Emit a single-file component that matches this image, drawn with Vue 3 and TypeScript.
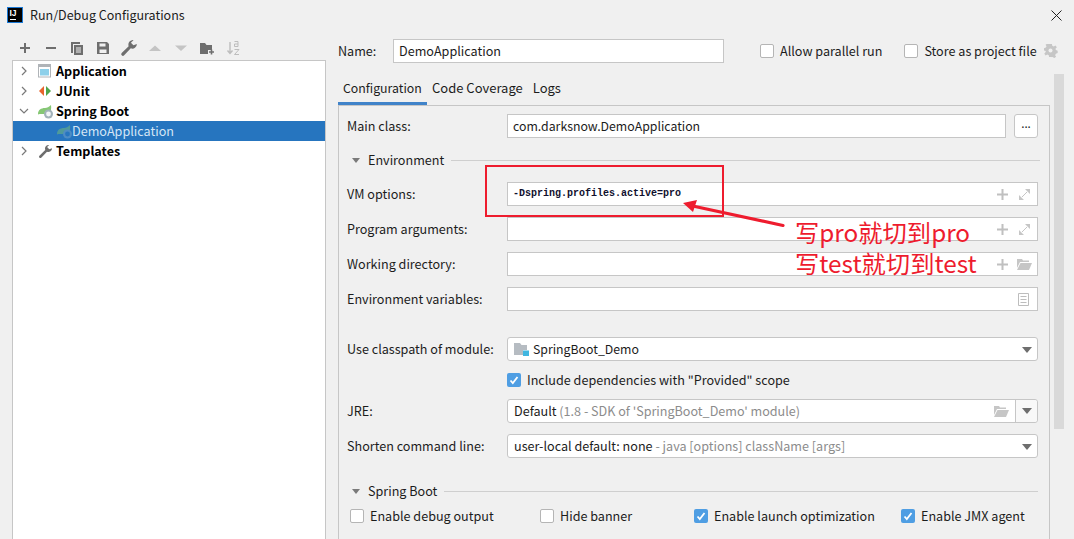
<script setup lang="ts">
const tree = [
  { label: 'Application', icon: 'app', open: false },
  { label: 'JUnit', icon: 'junit', open: false },
  { label: 'Spring Boot', icon: 'spring', open: true },
]
</script>

<template>
  <div class="dialog">
    <header class="titlebar">
      <svg class="logo" width="16" height="16" viewBox="0 0 16 16">
        <rect x="0.5" y="0.5" width="15" height="15" fill="#000" stroke="#1b79d6" />
        <text x="2.5" y="9" class="logo-text">IJ</text>
        <rect x="3" y="12" width="6" height="1" fill="#fff" />
      </svg>
      <span class="title">Run/Debug Configurations</span>
      <svg class="close" width="11" height="11" viewBox="0 0 11 11">
        <path d="M.5.5l10 10M10.500.5l-10 10" stroke="#222" fill="none" />
      </svg>
    </header>

    <div class="main">
      <aside class="side">
        <div class="toolbar">
          <svg width="16" height="16" viewBox="0 0 16 16"><path d="M3 8h10M8 3v10" stroke="#6e6e6e" stroke-width="2" /></svg>
          <svg width="16" height="16" viewBox="0 0 16 16"><path d="M3 8h10" stroke="#6e6e6e" stroke-width="2" /></svg>
          <svg width="16" height="16" viewBox="0 0 16 16"><path d="M2 2h9v2H4v9H2z" fill="#6e6e6e" /><path d="M5 5h9v10H5z" fill="#6e6e6e" /><path d="M7 8h5M7 10h5M7 12h5" stroke="#f0f0f0" /></svg>
          <svg width="16" height="16" viewBox="0 0 16 16"><path d="M2 2h10l2 2v10H2z" fill="#6e6e6e" /><path d="M4.500 3.500h6v3h-6zM4.500 9.500h7v3.500h-7z" fill="#f0f0f0" /></svg>
          <svg width="18" height="18" viewBox="0 0 16 16"><path d="M15 4.500a4 4 0 0 1-5.400 3.800L3.700 14.500a1.500 1.500 0 0 1-2.200-2.100l6.200-6A4 4 0 0 1 12 1l-2.300 2.300L12 5.500z" fill="#6e6e6e" /></svg>
          <svg width="16" height="16" viewBox="0 0 16 16"><path d="M2 11l6-5.500 6 5.500z" fill="#c4c4c4" /></svg>
          <svg width="16" height="16" viewBox="0 0 16 16"><path d="M2 5.500l6 5.500 6-5.500z" fill="#c4c4c4" /></svg>
          <svg width="16" height="16" viewBox="0 0 16 16"><path d="M1 3h5l1.500 2H13v5H9v4H1z" fill="#6e6e6e" /><path d="M10 12h5M12.500 9.500v5" stroke="#6e6e6e" stroke-width="1.600" /></svg>
          <svg width="16" height="16" viewBox="0 0 16 16"><path d="M5 2v11M2.500 10.500L5 13.500l2.500-3" stroke="#bdbdbd" fill="none" stroke-width="1.400" /><path d="M9.500 1.500h3.500v5h-3.500v-2.500h3.500M9.500 9.500h4.500l-4.500 5h4.500" stroke="#bdbdbd" fill="none" /></svg>
        </div>
        <div class="tree">
          <div v-for="n in tree" :key="n.label" class="node">
            <svg class="chev" width="10" height="10" viewBox="0 0 10 10">
              <path :d="n.open ? 'M1 3l4 4 4-4' : 'M3 1l4 4-4 4'" stroke="#7a7a7a" fill="none" stroke-width="1.200" />
            </svg>
            <svg v-if="n.icon === 'app'" class="ico" width="14" height="14" viewBox="0 0 14 14">
              <rect x="0" y="0" width="13" height="2" fill="#b0b4b8" />
              <rect x=".5" y="2.500" width="12" height="10.500" fill="#fff" stroke="#b0b4b8" />
              <rect x="2" y="5" width="9" height="6.500" fill="#8dd0ea" />
            </svg>
            <svg v-else-if="n.icon === 'junit'" class="ico" width="14" height="14" viewBox="0 0 14 14">
              <path d="M6 2L1 7l5 5z" fill="#e8642d" />
              <path d="M8 2l5 5-5 5z" fill="#4fa54a" />
            </svg>
            <svg v-else class="ico wide-ico" width="15" height="15" viewBox="0 0 15 15">
              <path d="M0 10C0 6 3 4 7 4c2 0 4-1 6-3 .5 3 0 6-1.500 9H1.500C.8 10.500 0 10.500 0 10z" fill="#86c774" />
              <circle cx="10.500" cy="10" r="4.500" fill="#a2b2ba" />
              <circle cx="10.500" cy="10" r="2.400" fill="#f2f5f6" />
            </svg>
            <span>{{ n.label }}</span>
          </div>
          <div class="node selected">
            <svg class="ico child" width="15" height="15" viewBox="0 0 15 15">
              <path d="M0 10C0 6 3 4 7 4c2 0 4-1 6-3 .5 3 0 6-1.500 9H1.500C.8 10.500 0 10.500 0 10z" fill="#4f9a9a" />
              <circle cx="10.500" cy="10" r="4.500" fill="#4e8cc4" />
              <circle cx="10.500" cy="10" r="2.400" fill="#2675bf" />
            </svg>
            <span>DemoApplication</span>
          </div>
          <div class="node">
            <svg class="chev" width="10" height="10" viewBox="0 0 10 10"><path d="M3 1l4 4-4 4" stroke="#7a7a7a" fill="none" stroke-width="1.200" /></svg>
            <svg class="ico wide-ico" width="15" height="15" viewBox="0 0 16 16"><path d="M15 4.500a4 4 0 0 1-5.400 3.800L3.700 14.500a1.500 1.500 0 0 1-2.200-2.100l6.200-6A4 4 0 0 1 12 1l-2.300 2.300L12 5.500z" fill="#6e6e6e" /></svg>
            <span>Templates</span>
          </div>
        </div>
      </aside>

      <section class="content">
        <div class="name-row">
          <label class="name-label">Name:</label>
          <div class="field name-field">DemoApplication</div>
          <span class="check first"><i class="box"></i>Allow parallel run</span>
          <span class="check second"><i class="box"></i>Store as project file</span>
          <svg class="gear" width="14" height="14" viewBox="0 0 14 14">
            <path d="M5.500 0h3l.4 2 1.600.700 1.800-1.100 1.500 2-1.400 1.500.3 1.400 2 .7v2.600l-2 .7-.7 1.500 1 1.700-2 1.500-1.600-1.300-1.400.400L8.500 14h-3l-.4-2-1.600-.7-1.700 1.100-1.500-2 1.300-1.600L2 7.500l-2-.5V4.500l2-.7.700-1.500-1-1.600 2-1.200z" fill="#c6c6c6" transform="scale(.93)" />
            <circle cx="6.500" cy="6.500" r="2" fill="#f0f0f0" />
          </svg>
        </div>

        <nav class="tabs">
          <span class="tab active">Configuration</span>
          <span class="tab">Code Coverage</span>
          <span class="tab">Logs</span>
        </nav>

        <div class="panel">
          <div class="row">
            <label>Main class:</label>
            <div class="field grow small">com.darksnow.DemoApplication</div>
            <button class="dots">...</button>
          </div>

          <div class="section env">
            <i class="tri"></i><span>Environment</span><hr />
          </div>

          <div class="row vm">
            <label>VM options:</label>
            <div class="field grow mono">
              <span>-Dspring.profiles.active=pro</span>
              <svg class="plus" width="11" height="11" viewBox="0 0 11 11"><path d="M0 5.500h11M5.500 0v11" stroke="#c0c0c0" stroke-width="2" /></svg>
              <svg class="expand" width="13" height="13" viewBox="0 0 13 13"><path d="M7 1h5v5zM1 7v5h5z" fill="#c6c6c6" /><path d="M9 4L4 9" stroke="#c6c6c6" /></svg>
            </div>
          </div>
          <div class="row tight">
            <label>Program arguments:</label>
            <div class="field grow">
              <svg class="plus" width="11" height="11" viewBox="0 0 11 11"><path d="M0 5.500h11M5.500 0v11" stroke="#c0c0c0" stroke-width="2" /></svg>
              <svg class="expand" width="13" height="13" viewBox="0 0 13 13"><path d="M7 1h5v5zM1 7v5h5z" fill="#c6c6c6" /><path d="M9 4L4 9" stroke="#c6c6c6" /></svg>
            </div>
          </div>
          <div class="row tight">
            <label>Working directory:</label>
            <div class="field grow">
              <svg class="plus" width="11" height="11" viewBox="0 0 11 11"><path d="M0 5.500h11M5.500 0v11" stroke="#c0c0c0" stroke-width="2" /></svg>
              <svg class="expand wide" width="15" height="11" viewBox="0 0 15 11"><path d="M0 0h5l1 1.500h6V3H3L0 9z" fill="#c6c6c6" /><path d="M3.500 4H15l-3 7H0z" fill="#c6c6c6" /></svg>
            </div>
          </div>
          <div class="row tight">
            <label>Environment variables:</label>
            <div class="field grow">
              <svg class="expand doc" width="11" height="13" viewBox="0 0 11 13"><path d="M.5.500h10v12H.500z" fill="#fff" stroke="#bdbdbd" /><path d="M2.500 3.500h6M2.500 6.500h6M2.500 9.500h6" stroke="#bdbdbd" /></svg>
            </div>
          </div>

          <div class="row module">
            <label>Use classpath of module:</label>
            <div class="field grow round small">
              <svg class="folder" width="15" height="13" viewBox="0 0 15 13"><path d="M0 0h6l1.500 2H13v5H9v5H0z" fill="#b6bcc2" /><rect x="9" y="7.500" width="6" height="5.500" fill="#40b6e0" /></svg>
              <span>SpringBoot_Demo</span>
              <i class="caret"></i>
            </div>
          </div>
          <div class="row include">
            <span class="check"><i class="box on"><svg width="14" height="14" viewBox="0 0 14 14"><path d="M3.500 7.500l2.300 2.500 4.700-6" stroke="#fff" stroke-width="1.800" fill="none" /></svg></i>Include dependencies with "Provided" scope</span>
          </div>
          <div class="row jre">
            <label>JRE:</label>
            <div class="field grow round">
              <span>Default <em>(1.8 - SDK of 'SpringBoot_Demo' module)</em></span>
              <svg class="expand wide jre-folder" width="15" height="11" viewBox="0 0 15 11"><path d="M0 0h5l1 1.500h6V3H3L0 9z" fill="#c6c6c6" /><path d="M3.500 4H15l-3 7H0z" fill="#c6c6c6" /></svg>
              <span class="split"><i class="caret static"></i></span>
            </div>
          </div>
          <div class="row tight">
            <label>Shorten command line:</label>
            <div class="field grow round">
              <span>user-local default: none <em>- java [options] className [args]</em></span>
              <i class="caret"></i>
            </div>
          </div>

          <div class="section boot">
            <i class="tri"></i><span>Spring Boot</span><hr />
          </div>
          <div class="boot-checks">
            <span class="check w1"><i class="box"></i>Enable debug output</span>
            <span class="check w2"><i class="box"></i>Hide banner</span>
            <span class="check w3"><i class="box on"><svg width="14" height="14" viewBox="0 0 14 14"><path d="M3.500 7.500l2.300 2.500 4.700-6" stroke="#fff" stroke-width="1.800" fill="none" /></svg></i>Enable launch optimization</span>
            <span class="check"><i class="box on"><svg width="14" height="14" viewBox="0 0 14 14"><path d="M3.500 7.500l2.300 2.500 4.700-6" stroke="#fff" stroke-width="1.800" fill="none" /></svg></i>Enable JMX agent</span>
          </div>
        </div>
      </section>
    </div>

    <div class="scrollbar"></div>

    <!-- hand-drawn annotation lying over the dialog -->
    <div class="mark-box"></div>
    <svg class="mark-arrow" width="110" height="34" viewBox="0 0 110 34">
      <path d="M12 6.500L100 25.500" stroke="#ee1c2e" stroke-width="3.200" stroke-linecap="round" />
      <path d="M0 3L14 0 10 12z" fill="#ee1c2e" />
    </svg>
    <div class="mark-text">
      <div>写pro就切到pro</div>
      <div>写test就切到test</div>
    </div>
  </div>
</template>

<style>
html, body { margin: 0; background: #f0f0f0; }
</style>

<style scoped>
.dialog {
  position: relative;
  width: 1074px;
  height: 539px;
  overflow: hidden;
  background: #f0f0f0;
  color: #1c1c1c;
  font: 12.600px/18px "Noto Sans CJK SC", "Noto Sans", sans-serif;
}
.titlebar { height: 30px; display: flex; align-items: center; padding: 0 0 0 7px; }
.logo-text { font: bold 8.500px "Liberation Sans", sans-serif; fill: #fff; }
.title { margin-left: 7px; font-size: 12.500px; }
.close { margin-left: auto; margin-right: 12px; }

.main { display: flex; height: 509px; }
.side { width: 314px; margin-left: 12px; flex: none; }
.toolbar { height: 30px; display: flex; align-items: center; gap: 10px; padding: 5px 0 0 5px; box-sizing: border-box; }
.toolbar svg { flex: none; }
.toolbar svg:nth-child(5) { margin: 0 -1px; }
.tree { height: 479px; box-sizing: border-box; background: #fff; border: 1px solid #c6c6c6; border-bottom: 0; }
.node { height: 20px; display: flex; align-items: center; font-weight: 700; color: #000; }
.chev { margin-left: 6px; flex: none; }
.ico { margin-left: 9px; margin-right: 4px; flex: none; }
.wide-ico { margin-right: 3px; }
.selected { background: #2675bf; color: #d5e5f5; font-weight: 400; }
.ico.child { margin-left: 44px; margin-right: 0; }

.content { position: relative; margin-left: 12px; width: 712px; }
.name-row { display: flex; align-items: center; height: 24px; margin-top: 9px; width: 736px; }
.name-label { width: 55px; flex: none; padding-bottom: 1px; }
.field {
  height: 24px;
  box-sizing: border-box;
  background: #fff;
  border: 1px solid #c6c6c6;
  display: flex;
  align-items: center;
  padding-left: 5px;
  white-space: nowrap;
}
.small { font-size: 12.300px; }
.name-field { width: 331px; flex: none; padding-bottom: 1px; }
.check { display: inline-flex; align-items: center; white-space: nowrap; }
.first { margin-left: 36px; }
.second { margin-left: 22px; }
.box {
  width: 14px;
  height: 14px;
  box-sizing: border-box;
  display: block;
  flex: none;
  margin-right: 6px;
  border: 1px solid #b5b5b5;
  border-radius: 2px;
  background: #fff;
}
.box.on { border: 0; background: #4f9ee3; }
.box.on svg { display: block; }
.gear { margin-left: 7px; flex: none; }

.tabs { display: flex; height: 28px; margin-top: 14px; align-items: center; }
.tab { padding: 0 5px; height: 28px; line-height: 22px; box-sizing: border-box; font-size: 13px; }
.active { border-bottom: 3px solid #4083c9; width: 89px; font-size: 12.300px; }

.panel {
  height: 434px;
  box-sizing: border-box;
  border: 1px solid #c6c6c6;
  border-bottom: 0;
  padding: 8px 11px 0 8px;
}
.row { display: flex; align-items: center; height: 24px; }
.row label { width: 160px; flex: none; }
.grow { flex: 1; min-width: 0; position: relative; }
.dots {
  width: 24px;
  height: 24px;
  margin-left: 8px;
  padding: 0 0 6px;
  flex: none;
  background: #fff;
  border: 1px solid #c6c6c6;
  border-radius: 3px;
  font: 12px "Noto Sans", sans-serif;
  color: #222;
}
.section { display: flex; align-items: center; height: 18px; }
.section hr { flex: 1; height: 1px; margin: 0 0 0 7px; border: 0; background: #cfcfcf; }
.env { margin-top: 13px; padding-left: 5px; }
.env hr { margin-right: -2px; }
.tri {
  width: 0;
  height: 0;
  margin-right: 8px;
  border: 4px solid transparent;
  border-top: 5px solid #7a7a7a;
  border-bottom: 0;
}
.vm { margin-top: 13px; }
.tight { margin-top: 11px; }
.mono { font: 700 10px/18px "Liberation Mono", monospace; color: #10102e; padding-left: 5px; }
.plus { position: absolute; right: 29px; top: 6px; }
.expand { position: absolute; right: 6px; top: 5px; }
.wide { right: 5px; top: 6px; }
.doc { right: 8px; top: 5px; }
.module { margin-top: 26px; }
.round { border-radius: 3px; padding-left: 6px; }
.folder { margin-right: 4px; flex: none; }
.caret {
  position: absolute;
  right: 5px;
  top: 9px;
  width: 0;
  height: 0;
  border: 5px solid transparent;
  border-top: 6px solid #6e6e6e;
  border-bottom: 0;
}
.caret.static { position: static; display: block; }
.include { margin-top: 7px; padding-left: 160px; height: 24px; }
.jre { margin-top: 7px; }
em { font-style: normal; color: #8c8c8c; }
.jre-folder { right: 28px; }
.split {
  position: absolute;
  right: 0;
  top: 0;
  width: 21px;
  height: 22px;
  border-left: 1px solid #c6c6c6;
  background: #f8f8f8;
  border-radius: 0 3px 3px 0;
  display: flex;
  align-items: center;
  justify-content: center;
}
.boot { margin-top: 24px; padding-left: 5px; }
.boot-checks { display: flex; margin-top: 4px; padding-left: 3px; height: 24px; align-items: center; }
.w1 { width: 190px; }
.w2 { width: 154px; }
.w3 { width: 207px; }

.scrollbar {
  position: absolute;
  left: 1054px;
  top: 74px;
  width: 10px;
  height: 355px;
  background: #d9d9d9;
}
.mark-box {
  position: absolute;
  left: 485px;
  top: 165px;
  width: 239px;
  height: 52px;
  box-sizing: border-box;
  border: 2px solid #ee1c2e;
}
.mark-arrow { position: absolute; left: 683px; top: 200px; }
.mark-text {
  position: absolute;
  left: 795px;
  top: 216px;
  font: 24.300px/31px "Noto Sans CJK SC", sans-serif;
  color: #ee1c2e;
  white-space: nowrap;
}
</style>
